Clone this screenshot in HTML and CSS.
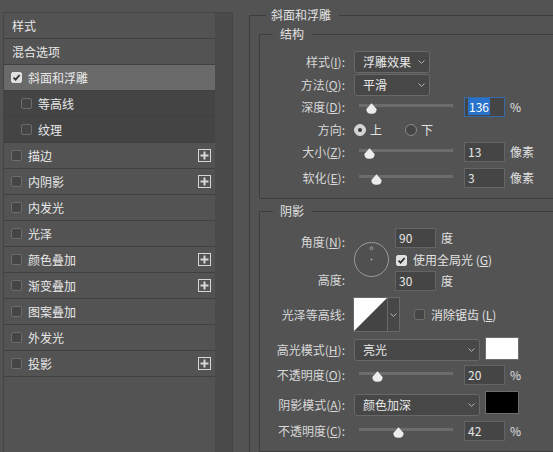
FILE: index.html
```html
<!DOCTYPE html>
<html lang="zh-CN">
<head>
<meta charset="utf-8">
<title>图层样式</title>
<link rel="stylesheet" href="styles.css">
</head>
<body>
<div class="dialog">
  <aside class="panel">
    <ul class="list">
      <li class="item head">样式</li>
      <li class="item head">混合选项</li>
      <li class="item selected"><span class="cb on"><svg width="9" height="9" viewBox="0 0 9 9"><path d="M1.5 4.6 L3.6 6.7 L7.6 2" fill="none" stroke="#333" stroke-width="1.8"/></svg></span><span class="name">斜面和浮雕</span></li>
      <li class="item sub"><span class="cb"></span><span class="name">等高线</span></li>
      <li class="item sub"><span class="cb"></span><span class="name">纹理</span></li>
      <li class="item"><span class="cb"></span><span class="name">描边</span><svg class="plus" width="13" height="13" viewBox="0 0 13 13"><rect x="0.5" y="0.5" width="12" height="12" fill="none" stroke="#d6d6d6"/><path d="M2.5 6.5h8M6.5 2.5v8" stroke="#d6d6d6" stroke-width="2"/></svg></li>
      <li class="item"><span class="cb"></span><span class="name">内阴影</span><svg class="plus" width="13" height="13" viewBox="0 0 13 13"><rect x="0.5" y="0.5" width="12" height="12" fill="none" stroke="#d6d6d6"/><path d="M2.5 6.5h8M6.5 2.5v8" stroke="#d6d6d6" stroke-width="2"/></svg></li>
      <li class="item"><span class="cb"></span><span class="name">内发光</span></li>
      <li class="item"><span class="cb"></span><span class="name">光泽</span></li>
      <li class="item"><span class="cb"></span><span class="name">颜色叠加</span><svg class="plus" width="13" height="13" viewBox="0 0 13 13"><rect x="0.5" y="0.5" width="12" height="12" fill="none" stroke="#d6d6d6"/><path d="M2.5 6.5h8M6.5 2.5v8" stroke="#d6d6d6" stroke-width="2"/></svg></li>
      <li class="item"><span class="cb"></span><span class="name">渐变叠加</span><svg class="plus" width="13" height="13" viewBox="0 0 13 13"><rect x="0.5" y="0.5" width="12" height="12" fill="none" stroke="#d6d6d6"/><path d="M2.5 6.5h8M6.5 2.5v8" stroke="#d6d6d6" stroke-width="2"/></svg></li>
      <li class="item"><span class="cb"></span><span class="name">图案叠加</span></li>
      <li class="item"><span class="cb"></span><span class="name">外发光</span></li>
      <li class="item"><span class="cb"></span><span class="name">投影</span><svg class="plus" width="13" height="13" viewBox="0 0 13 13"><rect x="0.5" y="0.5" width="12" height="12" fill="none" stroke="#d6d6d6"/><path d="M2.5 6.5h8M6.5 2.5v8" stroke="#d6d6d6" stroke-width="2"/></svg></li>
    </ul>
    <div class="gutter"></div>
  </aside>

  <main class="main">
    <section class="group outer">
      <h2 class="gtitle"><span>斜面和浮雕</span></h2>

      <section class="group inner structure">
        <h3 class="gtitle"><span>结构</span></h3>

        <div class="row r-sel first">
          <span class="lbl">样式(<u>I</u>):</span>
          <div class="select narrow"><span>浮雕效果</span><svg width="7" height="4" viewBox="0 0 7 4"><path d="M0.5 0.5 L3.5 3.3 L6.5 0.5" fill="none" stroke="#b4b4b4"/></svg></div>
        </div>
        <div class="row r-sel gap1">
          <span class="lbl">方法(<u>Q</u>):</span>
          <div class="select narrow"><span>平滑</span><svg width="7" height="4" viewBox="0 0 7 4"><path d="M0.5 0.5 L3.5 3.3 L6.5 0.5" fill="none" stroke="#b4b4b4"/></svg></div>
        </div>
        <div class="row gap1">
          <span class="lbl">深度(<u>D</u>):</span>
          <div class="slider"><div class="track"></div><svg class="thumb" style="left:7px" width="11" height="11" viewBox="0 0 11 11"><path d="M5.5 0.3 L10.6 6 Q10.8 10.7 6 10.7 H5 Q0.2 10.7 0.4 6 Z" fill="#ececec"/></svg></div>
          <span class="num focus"><span class="sel">136</span></span>
          <span class="unit">%</span>
        </div>
        <div class="row gap3">
          <span class="lbl">方向:</span>
          <span class="radio on"></span><span class="rtext">上</span>
          <span class="radio off"></span><span class="rtext">下</span>
        </div>
        <div class="row gap2">
          <span class="lbl">大小(<u>Z</u>):</span>
          <div class="slider"><div class="track"></div><svg class="thumb" style="left:4.5px" width="11" height="11" viewBox="0 0 11 11"><path d="M5.5 0.3 L10.6 6 Q10.8 10.7 6 10.7 H5 Q0.2 10.7 0.4 6 Z" fill="#ececec"/></svg></div>
          <span class="num">13</span>
          <span class="unit">像素</span>
        </div>
        <div class="row gap6">
          <span class="lbl">软化(<u>E</u>):</span>
          <div class="slider"><div class="track"></div><svg class="thumb" style="left:11.5px" width="11" height="11" viewBox="0 0 11 11"><path d="M5.5 0.3 L10.6 6 Q10.8 10.7 6 10.7 H5 Q0.2 10.7 0.4 6 Z" fill="#ececec"/></svg></div>
          <span class="num">3</span>
          <span class="unit">像素</span>
        </div>
      </section>

      <section class="group inner shading">
        <h3 class="gtitle"><span>阴影</span></h3>

        <div class="angle-block">
          <div class="lbl-col">
            <span class="lbl a1">角度(<u>N</u>):</span>
            <span class="lbl a2">高度:</span>
          </div>
          <svg class="dial" width="35" height="35" viewBox="0 0 35 35"><circle cx="17.5" cy="17.5" r="17" fill="#505050" stroke="#9c9c9c"/><circle cx="17.5" cy="17.5" r="0.9" fill="#b0b0b0"/><circle cx="17.5" cy="6.2" r="1.4" fill="none" stroke="#b0b0b0" stroke-width="0.8"/></svg>
          <div class="angle-fields">
            <div class="frow"><span class="num plain">90</span><span class="unit">度</span></div>
            <div class="check-row"><span class="cb on"><svg width="9" height="9" viewBox="0 0 9 9"><path d="M1.5 4.6 L3.6 6.7 L7.6 2" fill="none" stroke="#333" stroke-width="1.8"/></svg></span><span>使用全局光 (<u>G</u>)</span></div>
            <div class="frow"><span class="num plain">30</span><span class="unit">度</span></div>
          </div>
        </div>

        <div class="row r-contour">
          <span class="lbl">光泽等高线:</span>
          <div class="contour">
            <svg width="33" height="33" viewBox="0 0 33 33"><rect width="33" height="33" fill="#444"/><polygon points="0,0 33,0 0,33" fill="#ffffff"/></svg>
            <span class="contour-drop"><svg width="7" height="4" viewBox="0 0 7 4"><path d="M0.5 0.5 L3.5 3.3 L6.5 0.5" fill="none" stroke="#b4b4b4"/></svg></span>
          </div>
          <span class="cb aa"></span><span>消除锯齿 (<u>L</u>)</span>
        </div>

        <div class="row r-mode hl">
          <span class="lbl">高光模式(<u>H</u>):</span>
          <div class="select wide"><span>亮光</span><svg width="7" height="4" viewBox="0 0 7 4"><path d="M0.5 0.5 L3.5 3.3 L6.5 0.5" fill="none" stroke="#b4b4b4"/></svg></div>
          <span class="swatch white"></span>
        </div>
        <div class="row gap4">
          <span class="lbl">不透明度(<u>O</u>):</span>
          <div class="slider"><div class="track"></div><svg class="thumb" style="left:12.5px" width="11" height="11" viewBox="0 0 11 11"><path d="M5.5 0.3 L10.6 6 Q10.8 10.7 6 10.7 H5 Q0.2 10.7 0.4 6 Z" fill="#ececec"/></svg></div>
          <span class="num">20</span>
          <span class="unit">%</span>
        </div>
        <div class="row r-mode sh">
          <span class="lbl">阴影模式(<u>A</u>):</span>
          <div class="select wide"><span>颜色加深</span><svg width="7" height="4" viewBox="0 0 7 4"><path d="M0.5 0.5 L3.5 3.3 L6.5 0.5" fill="none" stroke="#b4b4b4"/></svg></div>
          <span class="swatch black"></span>
        </div>
        <div class="row gap5">
          <span class="lbl">不透明度(<u>C</u>):</span>
          <div class="slider"><div class="track"></div><svg class="thumb" style="left:33.5px" width="11" height="11" viewBox="0 0 11 11"><path d="M5.5 0.3 L10.6 6 Q10.8 10.7 6 10.7 H5 Q0.2 10.7 0.4 6 Z" fill="#ececec"/></svg></div>
          <span class="num">42</span>
          <span class="unit">%</span>
        </div>
      </section>
    </section>
  </main>
</div>
</body>
</html>
```

FILE: styles.css
```css
* { box-sizing: border-box; }
html, body { margin: 0; padding: 0; }
body {
  width: 553px;
  height: 452px;
  overflow: hidden;
  background: #535353;
  font-family: "Noto Sans CJK SC", "Noto Sans", sans-serif;
  font-size: 12px;
  color: #e2e2e2;
}
.dialog { display: flex; align-items: flex-start; width: 553px; height: 452px; overflow: hidden; }

/* left list */
.panel {
  margin: 12px 0 0 3px;
  width: 230px;
  height: 440px;
  flex: none;
  border: 1px solid #454545;
  border-bottom: none;
  display: flex;
}
.list { list-style: none; margin: 0; padding: 0; width: 211px; flex: none; }
.item {
  display: flex;
  align-items: center;
  height: 26px;
  border-bottom: 1px solid #404040;
  padding-left: 7px;
  line-height: 16px;
  color: #e8e8e8;
}
.item.head { padding-left: 8px; }
.item.selected { background: #6a6a6a; }
.item.sub { background: #444444; padding-left: 17px; }
.gutter { flex: 1; background: #4a4a4a; }

.cb {
  width: 11px;
  height: 11px;
  flex: none;
  border: 1px solid #6c6c6c;
  border-radius: 2px;
  background: #454545;
  margin-right: 6px;
}
.cb.on {
  background: #e0e0e0;
  border-color: #e0e0e0;
  display: flex;
  align-items: center;
  justify-content: center;
}
.cb.on svg { display: block; }
.plus { margin-left: auto; margin-right: 4px; flex: none; display: block; }

/* right side */
.main { margin-left: 16px; padding-top: 15px; flex: none; width: 304px; height: 452px; overflow: hidden; }
.group { border: 1px solid #3e3e3e; border-right: none; }
.outer { border-bottom: none; width: 304px; height: 437px; }
.inner { margin-left: 9px; }
.structure { margin-top: 11px; padding-bottom: 10px; }
.shading { margin-top: 12px; padding-bottom: 10px; }

.gtitle {
  margin: -9px 0 0 0;
  height: 16px;
  font-size: 12px;
  font-weight: normal;
  line-height: 16px;
  color: #e2e2e2;
}
.gtitle span { display: inline-block; background: #535353; }
.outer > .gtitle { padding-left: 16px; }
.outer > .gtitle span { padding: 0 8px 0 5px; }
.inner > .gtitle { padding-left: 13px; }
.inner > .gtitle span { padding: 0 8px 0 7px; }

.row { display: flex; align-items: center; height: 20px; white-space: nowrap; }
.row.first { margin-top: 9px; }
.gap1 { margin-top: 1px; }
.gap2 { margin-top: 2px; }
.gap3 { margin-top: 3px; }
.gap4 { margin-top: 4px; }
.gap5 { margin-top: 5px; }
.gap6 { margin-top: 6px; }
.r-sel { height: 22px; }

.lbl {
  width: 85px;
  flex: none;
  text-align: right;
  color: #d8d8d8;
  white-space: nowrap;
  line-height: 16px;
}
u { text-decoration: underline; text-underline-offset: 1px; }

.select {
  display: flex;
  align-items: center;
  justify-content: space-between;
  height: 22px;
  margin-left: 9px;
  padding: 0 4px 0 8px;
  border: 1px solid #686868;
  border-radius: 3px;
  background: #474747;
  color: #e8e8e8;
  line-height: 16px;
  flex: none;
}
.select svg { display: block; }
.select.narrow { width: 76px; }
.select.wide { width: 126px; padding-right: 4px; }

.slider { position: relative; width: 94px; height: 20px; margin-left: 14px; flex: none; }
.track { margin-top: 7px; height: 3px; background: #6c6c6c; }
.thumb { position: absolute; top: 6px; display: block; }

.num {
  width: 41px;
  height: 20px;
  flex: none;
  margin-left: 11px;
  padding-left: 3px;
  border: 1px solid #646464;
  background: #454545;
  color: #e6e6e6;
  line-height: 18px;
}
.num.plain { margin-left: 0; }
.num.focus { border-color: #3768a8; }
.sel { background: #2872cc; color: #ffffff; padding: 0 1px; }
.unit { margin-left: 5px; color: #e0e0e0; line-height: 16px; }

.radio {
  width: 12px;
  height: 12px;
  flex: none;
  border-radius: 50%;
  border: 1px solid #8a8a8a;
  background: #454545;
}
.radio.on {
  margin-left: 9px;
  background: #d4d4d4;
  border-color: #d4d4d4;
  display: flex;
  align-items: center;
  justify-content: center;
}
.radio.on::after { content: ""; width: 4px; height: 4px; border-radius: 50%; background: #3a3a3a; }
.radio.off { margin-left: 23px; }
.rtext { margin-left: 4px; line-height: 16px; }

/* shading */
.angle-block { display: flex; align-items: flex-start; margin-top: 9px; }
.lbl-col { width: 85px; flex: none; display: flex; flex-direction: column; }
.a1 { margin-top: 6px; }
.a2 { margin-top: 22px; }
.dial { display: block; flex: none; margin: 14px 0 0 9px; }
.angle-fields { margin-left: 6px; }
.frow { display: flex; align-items: center; height: 20px; }
.check-row { display: flex; align-items: center; height: 14px; margin: 5px 0 4px; line-height: 16px; white-space: nowrap; }
.check-row .cb { margin-left: 1px; }

.r-contour { height: 35px; margin-top: 6px; }
.contour { display: flex; height: 35px; margin-left: 8px; border: 1px solid #686868; flex: none; }
.contour > svg { display: block; }
.contour-drop {
  width: 12px;
  border-left: 1px solid #686868;
  background: #474747;
  display: flex;
  align-items: center;
  justify-content: center;
}
.contour-drop svg { display: block; }
.cb.aa { margin-left: 14px; }

.r-mode { height: auto; align-items: flex-start; }
.r-mode .lbl { line-height: 22px; }
.r-mode.hl { margin-top: 5px; }
.r-mode.hl .lbl, .r-mode.hl .select { margin-top: 2px; }
.r-mode.sh { margin-top: 6px; }
.r-mode.sh .lbl, .r-mode.sh .select { margin-top: 3px; }
.swatch { width: 34px; height: 23px; margin-left: 5px; border: 1px solid #6e6e6e; flex: none; }
.swatch.white { background: #ffffff; }
.swatch.black { background: #000000; }
```
